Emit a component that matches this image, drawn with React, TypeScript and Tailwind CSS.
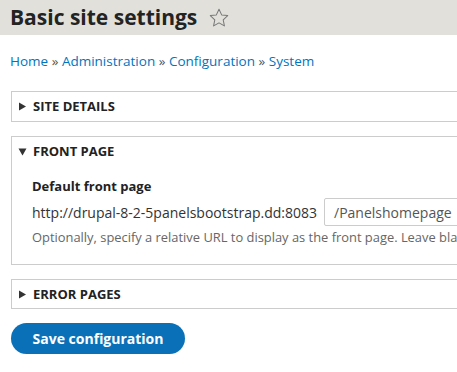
const font = { fontFamily: '"Open Sans", "Noto Sans", sans-serif' };

const Legend = ({ open, title }: { open?: boolean; title: string }) => (
    <div className="flex items-center h-[29px] pl-[6px] text-[13px] font-bold text-[#222] uppercase">
        <svg width="9" height="9" viewBox="0 0 9 9" className="mr-[6px]">
            {open ? <path d="M0.5 1.5h8L4.5 8.5z" fill="#333" /> : <path d="M1 0.5v8l7-4z" fill="#333" />}
        </svg>
        {title}
    </div>
);

const App = () => {
    return (
        <div className="w-[457px] h-[372px] overflow-hidden bg-white" style={font}>
            <div className="h-[35px] bg-[#e1e0db] flex items-center pl-[10px]">
                <h1 className="text-[21px] font-bold text-[#232323] leading-none">Basic site settings</h1>
                <svg width="22" height="22" viewBox="0 0 24 24" className="ml-[11px] mt-[1px]">
                    <path d="M12 2.5l2.9 6.1 6.6.8-4.9 4.6 1.3 6.6L12 17.3l-5.9 3.3 1.3-6.6-4.9-4.6 6.6-.8z" fill="none" stroke="#777" strokeWidth="1.1" strokeLinejoin="round" />
                </svg>
            </div>

            <div className="pl-[10px] mt-[17px] text-[13.5px] text-[#0074bd] leading-[18px] whitespace-nowrap">
                <a>Home</a> <span className="text-[#555]">»</span> <a>Administration</a> <span className="text-[#555]">»</span> <a>Configuration</a> <span className="text-[#555]">»</span> <a>System</a>
            </div>

            <div className="ml-[11px] w-[600px] mt-[21px] flex flex-col">
                <div className="border border-[#ccc] h-[31px]">
                    <Legend title="Site details" />
                </div>

                <div className="border border-[#ccc] mt-[14px] h-[129px]">
                    <Legend open title="Front page" />
                    <div className="pl-[20px] pt-[11px]">
                        <div className="text-[13px] font-bold text-[#222] leading-[18px]">Default front page</div>
                        <div className="flex items-center mt-[3px] text-[14px] text-[#333] whitespace-nowrap">
                            <span>http://drupal-8-2-5panelsbootstrap.dd:8083</span>
                            <div className="ml-[7px] h-[28px] w-[200px] border border-[#ccc] rounded-[2px] flex items-center pl-[9px] text-[14px] text-[#555]">
                                /Panelshomepage
                            </div>
                        </div>
                        <div className="mt-[3px] text-[12.9px] text-[#666] leading-[16px] whitespace-nowrap">
                            Optionally, specify a relative URL to display as the front page. Leave blank to display the default front page.
                        </div>
                    </div>
                </div>

                <div className="border border-[#ccc] mt-[14px] h-[30px]">
                    <Legend title="Error pages" />
                </div>
            </div>

            <button className="ml-[11px] mt-[14px] h-[31px] w-[174px] rounded-full bg-[#0a71b9] text-white text-[14px] font-bold">
                Save configuration
            </button>
        </div>
    );
};

export default App;
